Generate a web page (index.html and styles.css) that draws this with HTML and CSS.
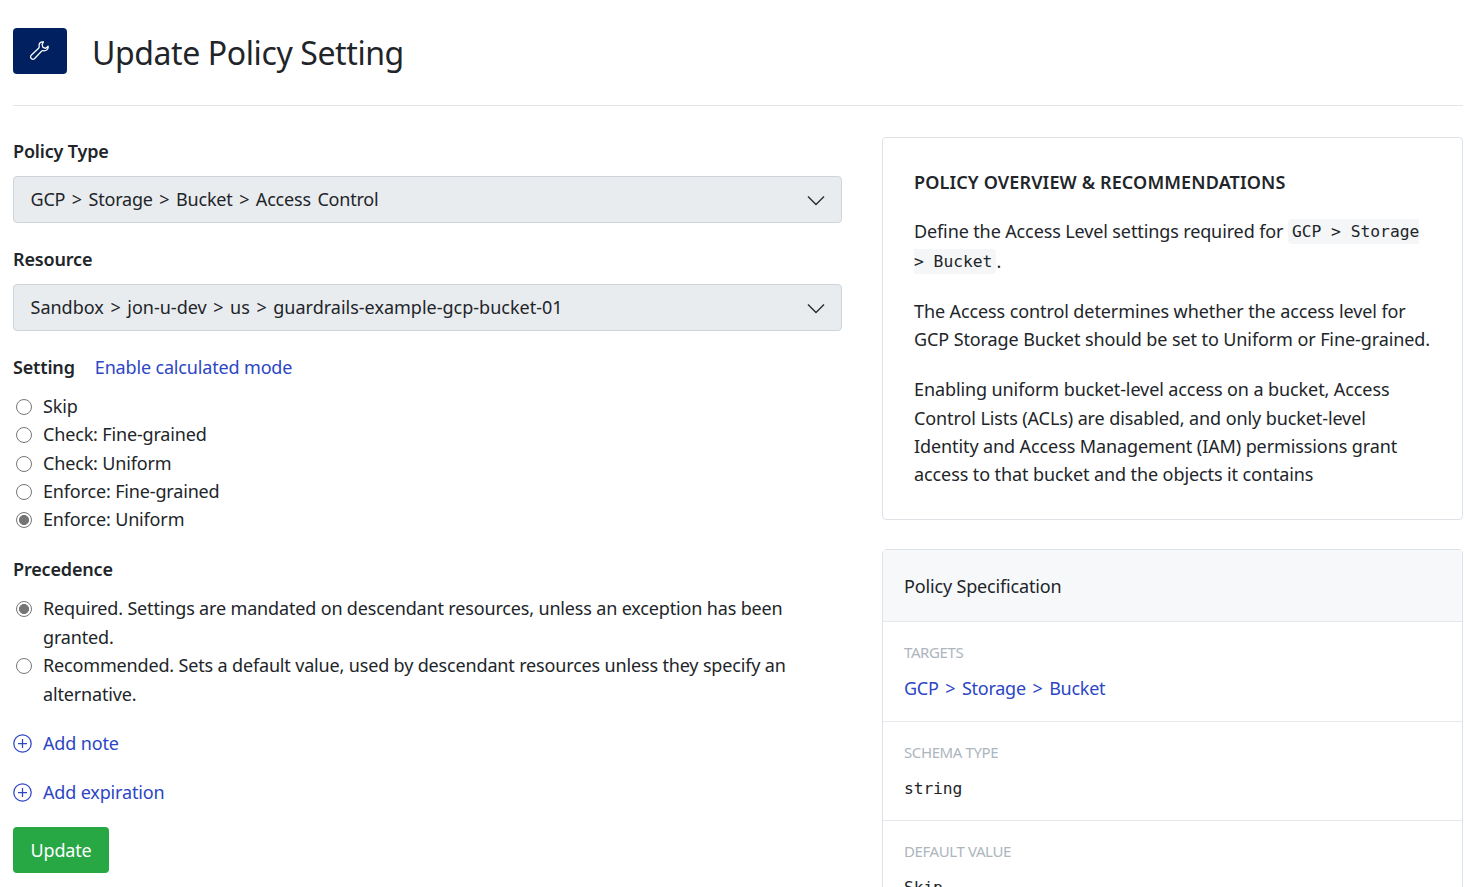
FILE: index.html
```html
<!DOCTYPE html>
<html lang="en">
<head>
<meta charset="utf-8">
<title>Update Policy Setting</title>
<link rel="stylesheet" href="styles.css">
</head>
<body>
<header class="page-header">
  <div class="header-icon">
    <svg width="19" height="19" viewBox="0 0 19 19" fill="none" stroke="#fff" stroke-width="1.25" stroke-linejoin="round" stroke-linecap="round"><path d="M13.4 .9C10.9 .2 8.5 2.5 9.2 5.4Q9.4 6.4 8.6 7.2L1.2 14.3C-.7 16.4 2.3 19.5 4.4 17.7L11.5 10.2Q12.2 9.4 13.3 9.7C16.4 10.2 18.7 7.8 18.1 5.2L15.7 7.3L12.9 6.3L12.1 3.5Z"/></svg>
  </div>
  <h1 class="page-title">Update Policy Setting</h1>
</header>
<div class="columns">
  <main class="form">
    <div class="label">Policy Type</div>
    <div class="select"><span class="type-path">GCP &gt; Storage &gt; Bucket &gt; Access Control</span>
      <svg width="18" height="11" viewBox="0 0 18 11" fill="none" stroke="#292c2e" stroke-width="1.4"><path d="M1 1.5L9 9.5L17 1.5"/></svg></div>
    <div class="label">Resource</div>
    <div class="select"><span class="resource-path">Sandbox &gt; jon-u-dev &gt; us &gt; guardrails-example-gcp-bucket-01</span>
      <svg width="18" height="11" viewBox="0 0 18 11" fill="none" stroke="#292c2e" stroke-width="1.4"><path d="M1 1.5L9 9.5L17 1.5"/></svg></div>
    <div class="label setting-label"><span>Setting</span><a class="link">Enable calculated mode</a></div>
    <div class="radios">
      <label class="option"><input type="radio" name="setting"><span>Skip</span></label>
      <label class="option"><input type="radio" name="setting"><span>Check: Fine-grained</span></label>
      <label class="option"><input type="radio" name="setting"><span>Check: Uniform</span></label>
      <label class="option"><input type="radio" name="setting"><span>Enforce: Fine-grained</span></label>
      <label class="option"><input type="radio" name="setting" checked><span>Enforce: Uniform</span></label>
    </div>
    <div class="label">Precedence</div>
    <div class="radios precedence">
      <label class="option"><input type="radio" name="precedence" checked><span>Required. Settings are mandated on descendant resources, unless an exception has been<br>granted.</span></label>
      <label class="option"><input type="radio" name="precedence"><span>Recommended. Sets a default value, used by descendant resources unless they specify an<br>alternative.</span></label>
    </div>
    <a class="link add"><svg width="19" height="19" viewBox="0 0 19 19" fill="none" stroke="currentColor" stroke-width="1.25"><circle cx="9.5" cy="9.5" r="8.7"/><path d="M9.5 5V14M5 9.5H14"/></svg><span>Add note</span></a>
    <a class="link add"><svg width="19" height="19" viewBox="0 0 19 19" fill="none" stroke="currentColor" stroke-width="1.25"><circle cx="9.5" cy="9.5" r="8.7"/><path d="M9.5 5V14M5 9.5H14"/></svg><span>Add expiration</span></a>
    <button class="update">Update</button>
  </main>
  <aside class="side">
    <section class="card overview">
      <h2 class="overview-title">POLICY OVERVIEW &amp; RECOMMENDATIONS</h2>
      <p class="with-code">Define the Access Level settings required for <code>GCP &gt; Storage<br>&gt; Bucket</code>.</p>
      <p>The Access control determines whether the access level for<br>GCP Storage Bucket should be set to Uniform or Fine-grained.</p>
      <p>Enabling uniform bucket-level access on a bucket, Access<br>Control Lists (ACLs) are disabled, and only bucket-level<br>Identity and Access Management (IAM) permissions grant<br>access to that bucket and the objects it contains</p>
    </section>
    <section class="card">
      <div class="spec-header">Policy Specification</div>
      <div class="spec-row"><div class="spec-name">TARGETS</div><a class="link target-path">GCP &gt; Storage &gt; Bucket</a></div>
      <div class="spec-row mono-row"><div class="spec-name">SCHEMA TYPE</div><div class="mono">string</div></div>
      <div class="spec-row mono-row"><div class="spec-name">DEFAULT VALUE</div><div class="mono">Skip</div></div>
    </section>
  </aside>
</div>
</body>
</html>
```
FILE: styles.css
```css
* { box-sizing: border-box; }
html, body { height: 100%; }
body { margin: 0; padding: 0 1px 0 13px; overflow: hidden; background: #fff; color: #212529; font: 18px/28.3px "Noto Sans", "Open Sans", sans-serif; letter-spacing: -0.16px; white-space: nowrap; }
.page-header { display: flex; align-items: center; height: 106px; padding-bottom: 3px; border-bottom: 1px solid #e5e5e5; }
.header-icon { display: flex; align-items: center; justify-content: center; width: 54px; height: 46px; padding-right: 1px; border-radius: 4px; background: #00205f; }
.header-icon svg { margin-bottom: 1px; }
.page-title { margin: 3px 0 0 25px; font-size: 32px; line-height: 40px; font-weight: 400; letter-spacing: -0.4px; }
.columns { display: flex; gap: 40px; padding-top: 31px; }
.form { width: 829px; }
.side { width: 581px; }
.label { height: 39px; font-weight: 600; }
.setting-label { display: flex; gap: 20px; }
.select { display: flex; align-items: center; justify-content: space-between; height: 47px; margin-bottom: 22px; padding: 0 16px 1px 16.5px; border: 1px solid #ced4da; border-radius: 4px; background: #e9ecef; }
.select svg { margin-top: 2px; }
.type-path { letter-spacing: -0.2px; word-spacing: 2.1px; }
.resource-path { letter-spacing: 0; word-spacing: 1.9px; }
.target-path { letter-spacing: -0.25px; word-spacing: 2.2px; }
.link { color: #2c46c4; font-weight: 400; }
.radios { display: flex; flex-direction: column; margin-bottom: 21.5px; }
.precedence { line-height: 28.6px; margin-bottom: 21px; }
.option { display: flex; align-items: flex-start; gap: 11px; padding-left: 3px; }
.option input { appearance: none; flex: none; width: 16px; height: 16px; margin: 7px 0 0; border: 1.4px solid #767676; border-radius: 50%; background: #fff; }
.option input:checked { background: radial-gradient(circle, #767676 4.7px, #fff 5.3px); }
.add { display: flex; align-items: center; gap: 11px; height: 28px; margin-bottom: 21px; }
.update { display: block; width: 96px; height: 46px; padding: 0; border: 0; border-radius: 4px; background: #28a745; color: #fff; font: inherit; letter-spacing: -0.2px; }
.card { border: 1px solid #dee2e6; border-radius: 4px; }
.overview { height: 383px; margin-bottom: 29px; padding: 30px 31px; letter-spacing: -0.1px; }
.overview-title { margin: 0 0 21px; font-size: 18px; line-height: 28px; font-weight: 600; letter-spacing: 0.13px; }
.overview p { margin: 0 0 21.7px; }
.overview .with-code { line-height: 29.6px; margin-bottom: 21px; letter-spacing: -0.12px; }
code, .mono { font-family: "DejaVu Sans Mono", monospace; font-size: 16.3px; letter-spacing: 0; }
code { padding: 3px 4px; border-radius: 4px; background: #f5f6f8; line-height: 1; vertical-align: 1px; }
.spec-header { height: 72px; padding: 22px 21px; border-bottom: 1px solid #e6e9ec; background: #f7f8fa; }
.spec-row { height: 100px; padding: 16px 21px; border-bottom: 1px solid #e6e9ec; }
.mono-row { height: 99px; }
.mono { padding-top: 1px; letter-spacing: -0.1px; }
.spec-name { height: 36px; color: #adb5bd; font-size: 15px; letter-spacing: -0.4px; }
```
